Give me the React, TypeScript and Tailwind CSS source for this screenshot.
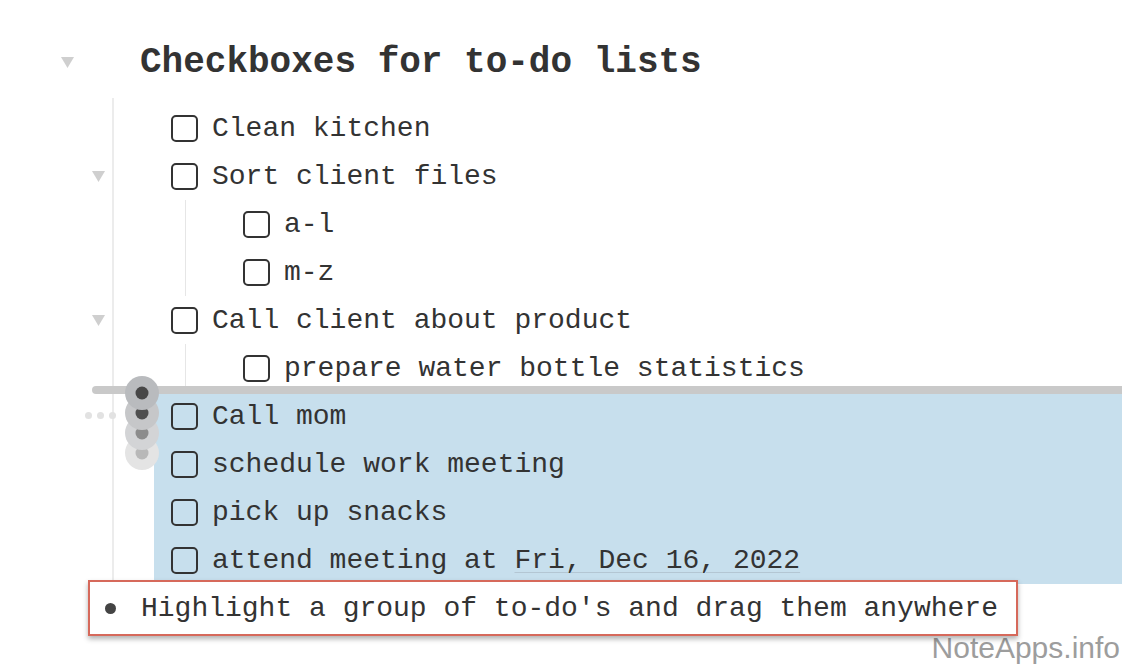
import React from 'react';

const mono = { fontFamily: '"Liberation Mono", "Courier New", monospace' };

function Toggle() {
  return (
    <svg width="13" height="11" viewBox="0 0 13 11">
      <polygon points="0,0 13,0 6.5,11" fill="#cfcfcf" />
    </svg>
  );
}

function Box() {
  return <span className="w-[27px] h-[27px] shrink-0 rounded-[5px] border-2 border-[#333]" />;
}

interface RowProps {
  text: React.ReactNode;
  toggle?: boolean;
  inset?: 'normal' | 'tight';
}

function Row({ text, toggle, inset = 'normal' }: RowProps) {
  return (
    <div className="flex items-center h-12 -ml-[32px]">
      <div className="w-[32px] flex justify-center">{toggle && <Toggle />}</div>
      <div className={`flex items-center gap-[14px] ${inset === 'tight' ? 'ml-[17px]' : 'ml-[57px]'}`}>
        <Box />
        <span className="whitespace-pre leading-[48px] translate-y-[1px]">{text}</span>
      </div>
    </div>
  );
}

function DragHandles() {
  // stacked bullets of the dragged group, first one on top
  const items = [
    { cy: 77, halo: '#e4e4e4', dot: '#b8b8b8' },
    { cy: 57, halo: '#d3d4d6', dot: '#8c8c8c' },
    { cy: 37, halo: '#c6c7c9', dot: '#4f4f4f' },
    { cy: 17, halo: '#b9bbbe', dot: '#474747' },
  ];
  return (
    <svg width="36" height="96" viewBox="0 0 36 96" className="absolute -left-[30px] -top-[16px]">
      {items.map((it) => (
        <g key={it.cy}>
          <circle cx="18" cy={it.cy} r="17" fill={it.halo} />
          <circle cx="18" cy={it.cy} r="6.5" fill={it.dot} />
        </g>
      ))}
    </svg>
  );
}

export default function App() {
  return (
    <div className="relative w-[1122px] h-[666px] overflow-hidden bg-white text-[#333]" style={mono}>
      {/* title */}
      <div className="mt-[38px] h-12 flex items-center pl-[61px]">
        <Toggle />
        <h1 className="ml-[66px] text-[36px] font-bold leading-[48px] whitespace-pre translate-y-[1px]">Checkboxes for to-do lists</h1>
      </div>

      {/* children */}
      <div className="mt-[12px] ml-[112px] border-l-2 border-[#ececec] pt-[6px] text-[28px]">
        <Row text="Clean kitchen" />
        <Row text="Sort client files" toggle />
        <div className="ml-[71px] border-l border-[#e6e6e6]">
          <Row text="a-l" />
          <Row text="m-z" />
        </div>
        <Row text="Call client about product" toggle />
        <div className="ml-[71px] border-l border-[#e6e6e6]">
          <Row text="prepare water bottle statistics" />
        </div>

        {/* selected group being dragged */}
        <div className="relative ml-[40px] bg-[#c7dfed]">
          <div className="absolute -top-[6px] -left-[62px] right-0 h-[8px] rounded-l-full bg-[#c9c9c9]" />
          <div className="absolute -left-[69px] top-[20px] flex gap-[5px]">
            <span className="w-[7px] h-[7px] rounded-full bg-[#e2e2e2]" />
            <span className="w-[7px] h-[7px] rounded-full bg-[#e2e2e2]" />
            <span className="w-[7px] h-[7px] rounded-full bg-[#e2e2e2]" />
          </div>
          <DragHandles />
          <Row text="Call mom" inset="tight" />
          <Row text="schedule work meeting" inset="tight" />
          <Row text="pick up snacks" inset="tight" />
          <Row
            inset="tight"
            text={
              <>
                attend meeting at{' '}
                <span className="underline decoration-[#b3c6d3] decoration-1 underline-offset-[4px]">Fri, Dec 16, 2022</span>
              </>
            }
          />
        </div>
      </div>

      {/* callout */}
      <div className="relative z-10 -mt-[4px] ml-[88px] w-[930px] h-[56px] border-2 border-[#d6695b] bg-white shadow-[0_3px_5px_rgba(0,0,0,0.3)] flex items-center pl-[15px]">
        <span className="w-[11px] h-[11px] rounded-full bg-[#444]" />
        <span className="ml-[25px] text-[28px] leading-[48px] whitespace-pre translate-y-[1px]">Highlight a group of to-do's and drag them anywhere</span>
      </div>

      <div
        className="absolute right-[2px] top-[631px] text-[30px] leading-[34px] text-[#9d9d9d]"
        style={{ fontFamily: '"Liberation Sans", Arial, sans-serif' }}
      >
        NoteApps.info
      </div>
    </div>
  );
}
